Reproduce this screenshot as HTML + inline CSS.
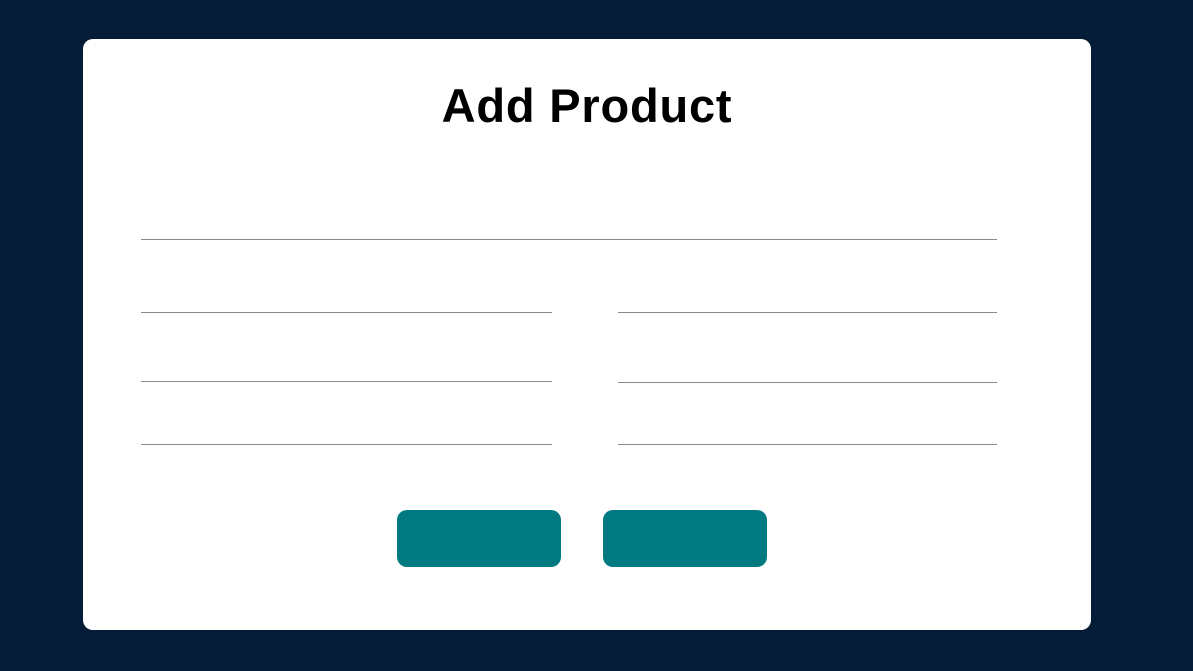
<!DOCTYPE html>
<html><head><style>
html,body{margin:0;padding:0}
body{width:1193px;height:671px;background:#041c37;position:relative;overflow:hidden;font-family:"Liberation Sans",sans-serif}
.card{position:absolute;left:83px;top:39px;width:1008px;height:591px;background:#fff;border-radius:10px}
h1{position:absolute;left:83px;width:1008px;top:80px;margin:0;text-align:center;font-size:47px;font-weight:bold;color:#000;line-height:52px;letter-spacing:0.8px}
.l{position:absolute;height:1px;background:#8a8a8a}
.b{position:absolute;top:510px;width:164px;height:57px;background:#007a80;border-radius:10px}
</style></head><body>
<div class="card"></div>
<h1>Add Product</h1>
<div class="l" style="left:141px;width:856px;top:239px"></div>
<div class="l" style="left:141px;width:411px;top:312px"></div>
<div class="l" style="left:618px;width:379px;top:312px"></div>
<div class="l" style="left:141px;width:411px;top:381px"></div>
<div class="l" style="left:618px;width:379px;top:382px"></div>
<div class="l" style="left:141px;width:411px;top:444px"></div>
<div class="l" style="left:618px;width:379px;top:444px"></div>
<div class="b" style="left:397px"></div>
<div class="b" style="left:603px"></div>
</body></html>
